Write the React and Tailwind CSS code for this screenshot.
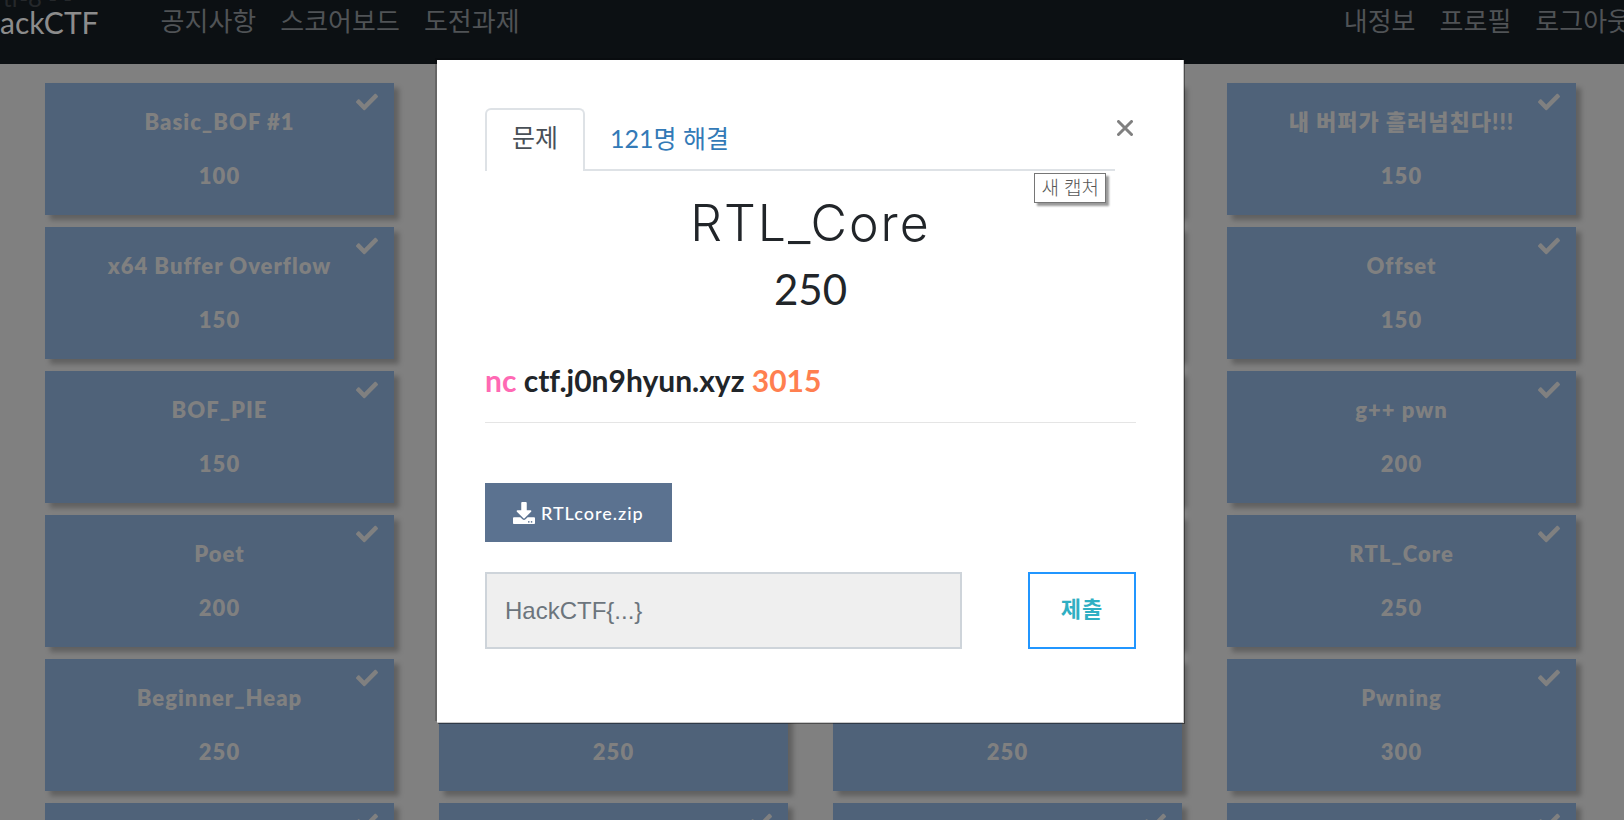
import { FaCheck, FaDownload } from "react-icons/fa";

const challenges = [
  { title: "Basic_BOF #1", points: 100 },
  {},
  {},
  { title: "내 버퍼가 흘러넘친다!!!", points: 150 },
  { title: "x64 Buffer Overflow", points: 150 },
  {},
  {},
  { title: "Offset", points: 150 },
  { title: "BOF_PIE", points: 150 },
  {},
  {},
  { title: "g++ pwn", points: 200 },
  { title: "Poet", points: 200 },
  {},
  {},
  { title: "RTL_Core", points: 250 },
  { title: "Beginner_Heap", points: 250 },
  { points: 250 },
  { points: 250 },
  { title: "Pwning", points: 300 },
  {},
  {},
  {},
  {},
];

function NavLink({ children }) {
  return (
    <a href="#" className="whitespace-nowrap text-[26px] leading-8 text-[#505356]">
      {children}
    </a>
  );
}

function Navbar() {
  return (
    <header className="relative flex h-16 items-start overflow-hidden bg-[#0c1013] pt-[2px]">
      <span aria-hidden="true" className="absolute -top-4 left-[3px] text-2xl leading-7 text-[#25282b]">
        tf-8 - -
      </span>
      <a href="#" className="text-[30px] leading-10 text-[#8c8c8c]">
        ackCTF
      </a>
      <nav className="flex grow justify-between pt-[3px] pl-[62px]">
        <div className="flex gap-6">
          <NavLink>공지사항</NavLink>
          <NavLink>스코어보드</NavLink>
          <NavLink>도전과제</NavLink>
        </div>
        <div className="-mr-[7px] flex gap-6">
          <NavLink>내정보</NavLink>
          <NavLink>프로필</NavLink>
          <NavLink>로그아웃</NavLink>
        </div>
      </nav>
    </header>
  );
}

function ChallengeCard({ title, points }) {
  return (
    <button
      type="button"
      className="relative flex h-[132px] flex-col items-center bg-[#4f6279] pt-6 text-[22px] leading-[30px] font-extrabold tracking-[1px] text-[#808080] shadow-[5px_5px_5px_rgba(0,0,0,0.25)]"
    >
      <FaCheck className="absolute top-2 right-4 size-[22px]" />
      <span className="h-[30px]">{title}</span>
      <span className="mt-6 h-[30px]">{points}</span>
    </button>
  );
}

function ChallengeDialog() {
  return (
    <div
      role="dialog"
      aria-label="RTL_Core"
      className="relative w-[747px] border-r border-b border-[#c8c8c8] bg-white pt-12 pr-[47px] pb-[73px] pl-12 shadow-[-2px_-2px_0_rgba(0,0,0,0.2),1px_1px_0_rgba(0,0,0,0.4)]"
    >
      <div className="flex items-start">
        <div role="tablist" className="flex grow border-b-2 border-[#dee2e6]">
          <button
            type="button"
            role="tab"
            aria-selected="true"
            className="-mb-[2px] h-[63px] rounded-t-md border-2 border-b-0 border-[#dee2e6] bg-white px-[25px] pb-[5px] text-[25px] text-[#495057]"
          >
            문제
          </button>
          <button type="button" role="tab" aria-selected="false" className="px-[25px] text-[25px] text-[#337ab7]">
            121명 해결
          </button>
        </div>
        <button type="button" aria-label="닫기" className="mt-[10px] mr-px flex size-5 items-center justify-center text-[#808080]">
          <svg viewBox="0 0 16 16" className="size-4" fill="none" stroke="currentColor" strokeWidth="3" strokeLinecap="round">
            <path d="M1.5 1.5l13 13M14.5 1.5l-13 13" />
          </svg>
        </button>
      </div>

      <div role="tooltip" className="absolute top-[113px] right-[77px] border border-[#767676] bg-white px-1.5 text-[19px] leading-7 font-light text-[#575757] shadow-[3px_3px_2px_rgba(0,0,0,0.4)]">
        새 캡처
      </div>

      <h2 className="mt-5 text-center font-['Inter','Lato',sans-serif] text-[50px] leading-[64px] font-light tracking-[2px] text-[#212529]">RTL_Core</h2>
      <p className="mt-[2px] text-center text-[42px] leading-[64px] text-[#212529]">250</p>

      <p className="mt-[39px] border-b border-[#e5e5e5] pb-[22px] text-3xl leading-10 font-bold text-[#212529] [font-variant-ligatures:none]">
        <span className="text-[#ff69b4]">nc</span> ctf.j0n9hyun.xyz <span className="text-[#ff7f50]">3015</span>
      </p>

      <a href="#" className="mt-[60px] inline-flex h-[59px] items-center gap-1.5 bg-[#5b7290] px-7 text-lg font-medium tracking-[1px] text-white">
        <FaDownload className="size-[22px]" />
        RTLcore.zip
      </a>

      <form className="mt-[30px] flex gap-[66px]">
        <input
          type="text"
          aria-label="Flag"
          placeholder="HackCTF{...}"
          className="h-[77px] min-w-0 grow border-2 border-[#ced4da] bg-[#efefef] px-[18px] font-['Liberation_Sans',sans-serif] text-2xl placeholder:text-[#6c757d]"
        />
        <button type="button" className="w-[108px] border-2 border-[#2196ff] pb-1 text-[22px] font-bold tracking-[1px] text-[#2fafc3]">
          제출
        </button>
      </form>
    </div>
  );
}

export default function App() {
  return (
    <div className="relative h-screen overflow-hidden bg-[#808080] font-['Lato','Noto_Sans_CJK_KR',sans-serif]">
      <Navbar />
      <main className="grid grid-cols-4 gap-x-[45px] gap-y-3 pt-[19px] pr-12 pl-[45px]">
        {challenges.map((challenge, index) => (
          <ChallengeCard key={index} {...challenge} />
        ))}
      </main>
      <div className="absolute inset-0 flex items-start justify-center pt-[60px] pr-[3px]">
        <ChallengeDialog />
      </div>
    </div>
  );
}
